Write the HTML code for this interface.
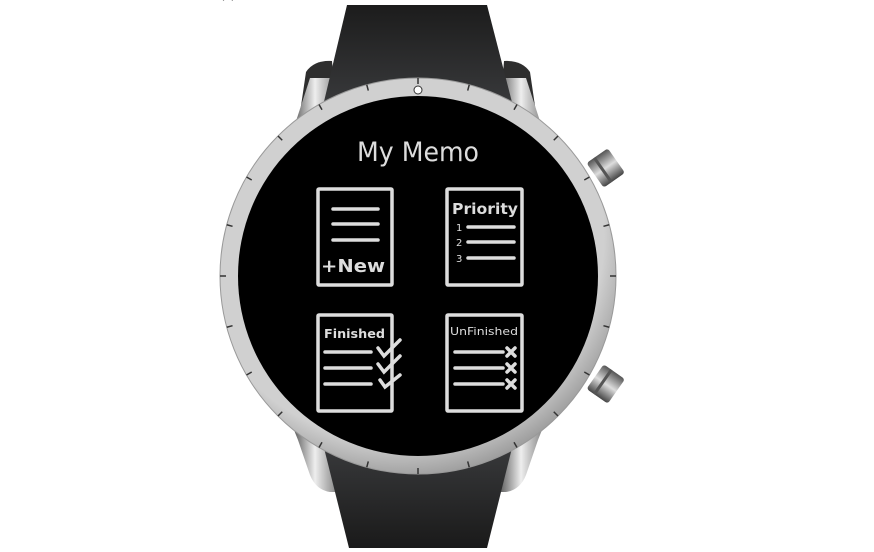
<!DOCTYPE html>
<html><head><meta charset="utf-8"><style>
html,body{margin:0;padding:0;background:#fff;width:874px;height:552px;overflow:hidden}
svg{display:block}
</style></head><body>
<svg width="874" height="552" viewBox="0 0 874 552" xmlns="http://www.w3.org/2000/svg">
<defs>
<linearGradient id="strapT" x1="0" y1="0" x2="0" y2="1"><stop offset="0" stop-color="#1c1c1c"/><stop offset="1" stop-color="#3a3b3d"/></linearGradient>
<linearGradient id="strapB" x1="0" y1="0" x2="0" y2="1"><stop offset="0" stop-color="#3a3b3d"/><stop offset="1" stop-color="#1a1a1a"/></linearGradient>
<linearGradient id="lug" x1="0" y1="0" x2="1" y2="0"><stop offset="0" stop-color="#444"/><stop offset="0.5" stop-color="#eee"/><stop offset="1" stop-color="#777"/></linearGradient>
<radialGradient id="bezel" cx="0.45" cy="0.4" r="0.65"><stop offset="0.8" stop-color="#d0d0d0"/><stop offset="1" stop-color="#888"/></radialGradient>
<linearGradient id="crown" x1="0" y1="0" x2="0" y2="1"><stop offset="0" stop-color="#555"/><stop offset="0.5" stop-color="#ddd"/><stop offset="1" stop-color="#444"/></linearGradient>
</defs>
<text x="220" y="-2" font-family="Liberation Sans,sans-serif" font-size="13" fill="#333">(?) Create Memo View</text>
<!-- crowns -->
<g transform="translate(600,172) rotate(-35)"><rect x="-6" y="-15" width="26" height="30" rx="3" fill="url(#crown)"/><rect x="2" y="-15" width="3" height="30" fill="#555"/></g>
<g transform="translate(600,380) rotate(35)"><rect x="-6" y="-15" width="26" height="30" rx="3" fill="url(#crown)"/><rect x="2" y="-15" width="3" height="30" fill="#555"/></g>
<!-- lugs -->
<path d="M306 72 Q314 60 332 61 L338 140 L296 140 Z" fill="#2e2e2e"/>
<path d="M298 115 L310 78 L338 78 L340 140 L290 140 Z" fill="url(#lug)"/>
<path d="M530 72 Q522 60 504 61 L498 140 L540 140 Z" fill="#2e2e2e"/>
<path d="M538 115 L526 78 L498 78 L496 140 L546 140 Z" fill="url(#lug)"/>
<path d="M298 440 L310 475 Q316 490 330 492 L340 492 L340 420 L290 420 Z" fill="url(#lug)"/>
<path d="M538 440 L526 475 Q520 490 506 492 L496 492 L496 420 L546 420 Z" fill="url(#lug)"/>
<!-- straps -->
<path d="M347 5 L487 5 L514 110 L322 110 Z" fill="url(#strapT)"/>
<path d="M322 440 L514 440 L487 548 L349 548 Z" fill="url(#strapB)"/>
<!-- bezel -->
<circle cx="418" cy="276" r="198" fill="url(#bezel)" stroke="#999" stroke-width="1"/>
<circle cx="418" cy="276" r="180" fill="#000"/>
<g stroke="#333" stroke-width="1.5">
<g id="t"><line x1="418" y1="78" x2="418" y2="84"/></g>
<use href="#t" transform="rotate(15 418 276)"/><use href="#t" transform="rotate(30 418 276)"/><use href="#t" transform="rotate(45 418 276)"/><use href="#t" transform="rotate(60 418 276)"/><use href="#t" transform="rotate(75 418 276)"/><use href="#t" transform="rotate(90 418 276)"/><use href="#t" transform="rotate(105 418 276)"/><use href="#t" transform="rotate(120 418 276)"/><use href="#t" transform="rotate(135 418 276)"/><use href="#t" transform="rotate(150 418 276)"/><use href="#t" transform="rotate(165 418 276)"/><use href="#t" transform="rotate(180 418 276)"/><use href="#t" transform="rotate(195 418 276)"/><use href="#t" transform="rotate(210 418 276)"/><use href="#t" transform="rotate(225 418 276)"/><use href="#t" transform="rotate(240 418 276)"/><use href="#t" transform="rotate(255 418 276)"/><use href="#t" transform="rotate(270 418 276)"/><use href="#t" transform="rotate(285 418 276)"/><use href="#t" transform="rotate(300 418 276)"/><use href="#t" transform="rotate(315 418 276)"/><use href="#t" transform="rotate(330 418 276)"/><use href="#t" transform="rotate(345 418 276)"/>
</g>
<circle cx="418" cy="90" r="4" fill="#fff" stroke="#333" stroke-width="1"/>
<text x="418" y="161" text-anchor="middle" font-family="DejaVu Sans,sans-serif" font-size="27" fill="#ddd" textLength="122" lengthAdjust="spacingAndGlyphs">My Memo</text>
<g fill="none" stroke="#ddd" stroke-width="3.5" stroke-linecap="round">
<rect x="318" y="189" width="74" height="96" rx="1"/>
<rect x="447" y="189" width="75" height="96" rx="1"/>
<rect x="318" y="315" width="74" height="96" rx="1"/>
<rect x="447" y="315" width="75" height="96" rx="1"/>
<line x1="333" y1="209" x2="378" y2="209"/><line x1="333" y1="224" x2="378" y2="224"/><line x1="333" y1="240" x2="378" y2="240"/>
<line x1="468" y1="227" x2="514" y2="227"/><line x1="468" y1="242" x2="514" y2="242"/><line x1="468" y1="258" x2="514" y2="258"/>
<line x1="325" y1="352" x2="371" y2="352"/><line x1="325" y1="368" x2="371" y2="368"/><line x1="325" y1="384" x2="371" y2="384"/>
<line x1="455" y1="352" x2="503" y2="352"/><line x1="455" y1="368" x2="503" y2="368"/><line x1="455" y1="384" x2="503" y2="384"/>
<path d="M378 348 L384 356 L400 340"/><path d="M378 364 L384 372 L400 356"/><path d="M380 380 L385 387 L400 375"/>
<path d="M507 348 L515 356 M515 348 L507 356"/><path d="M507 364 L515 372 M515 364 L507 372"/><path d="M507 380 L515 388 M515 380 L507 388"/>
</g>
<g font-family="DejaVu Sans,sans-serif" fill="#ddd" font-weight="bold">
<text x="321" y="272" font-size="18" textLength="64" lengthAdjust="spacingAndGlyphs">+New</text>
<text x="452" y="214" font-size="15" textLength="66" lengthAdjust="spacingAndGlyphs">Priority</text>
<text x="324" y="338" font-size="12.5" textLength="61" lengthAdjust="spacingAndGlyphs">Finished</text>
<text x="450" y="335" font-size="11" font-weight="normal" textLength="68" lengthAdjust="spacingAndGlyphs">UnFinished</text>
<text x="456" y="231" font-size="10" font-weight="normal">1</text>
<text x="456" y="246" font-size="10" font-weight="normal">2</text>
<text x="456" y="262" font-size="10" font-weight="normal">3</text>
</g>
</svg>
</body></html>
